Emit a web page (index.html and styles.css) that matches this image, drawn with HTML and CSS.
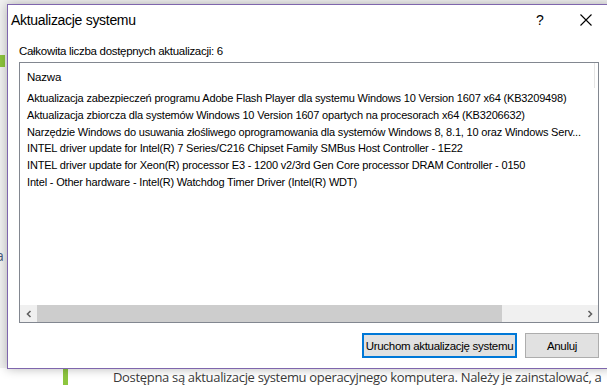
FILE: index.html
```html
<!DOCTYPE html>
<html lang="pl">
<head>
<meta charset="utf-8">
<title>Aktualizacje systemu</title>
<link rel="stylesheet" href="styles.css">
</head>
<body>
<div class="page">
  <div class="page-tab"></div>
  <div class="page-letter">a</div>
  <div class="page-bottom">
    <div class="green-bar"></div>
    <p class="page-text">Dostępna są aktualizacje systemu operacyjnego komputera. Należy je zainstalować, a</p>
  </div>
</div>

<div class="dialog">
  <div class="titlebar">
    <span class="title">Aktualizacje systemu</span>
    <span class="help">?</span>
    <span class="close">
      <svg width="12" height="12" viewBox="0 0 12 12"><path d="M0.5 0.5 L11.5 11.5 M11.5 0.5 L0.5 11.5" stroke="#000" stroke-width="1.1" fill="none"/></svg>
    </span>
  </div>
  <div class="content">
    <div class="count">Całkowita liczba dostępnych aktualizacji: 6</div>
    <div class="listbox">
      <div class="list-header"><span class="col">Nazwa</span><span class="col-div"></span></div>
      <div class="rows">
        <div class="row">Aktualizacja zabezpieczeń programu Adobe Flash Player dla systemu Windows 10 Version 1607 x64 (KB3209498)</div>
        <div class="row">Aktualizacja zbiorcza dla systemów Windows 10 Version 1607 opartych na procesorach x64 (KB3206632)</div>
        <div class="row">Narzędzie Windows do usuwania złośliwego oprogramowania dla systemów Windows 8, 8.1, 10 oraz Windows Serv...</div>
        <div class="row">INTEL driver update for Intel(R) 7 Series/C216 Chipset Family SMBus Host Controller - 1E22</div>
        <div class="row">INTEL driver update for Xeon(R) processor E3 - 1200 v2/3rd Gen Core processor DRAM Controller - 0150</div>
        <div class="row">Intel - Other hardware - Intel(R) Watchdog Timer Driver (Intel(R) WDT)</div>
      </div>
      <div class="hscroll">
        <span class="arrow left"><svg width="8" height="8" viewBox="0 0 8 8"><path d="M5.5 1 L2.5 4 L5.5 7" stroke="#606060" stroke-width="1.6" fill="none"/></svg></span>
        <span class="thumb"></span>
        <span class="track"></span>
        <span class="arrow right"><svg width="8" height="8" viewBox="0 0 8 8"><path d="M2.5 1 L5.5 4 L2.5 7" stroke="#606060" stroke-width="1.6" fill="none"/></svg></span>
      </div>
    </div>
    <div class="buttons">
      <button class="btn primary">Uruchom aktualizację systemu</button>
      <button class="btn">Anuluj</button>
    </div>
  </div>
</div>
</body>
</html>
```
FILE: styles.css
```css
html, body {
  margin: 0;
  padding: 0;
}
body {
  width: 607px;
  height: 385px;
  overflow: hidden;
  background: #f1f1f1;
  position: relative;
  font-family: "Liberation Sans", Arial, sans-serif;
}
.page {
  position: relative;
  width: 607px;
  height: 385px;
}
.page-tab {
  position: absolute;
  left: 0;
  top: 55px;
  width: 5px;
  height: 12px;
  background: #8cc43d;
}
.page-letter {
  position: absolute;
  left: -4px;
  top: 246px;
  font-family: "Open Sans", sans-serif;
  font-size: 14px;
  color: #4a5a7a;
}
.page-bottom {
  position: absolute;
  left: 0;
  top: 368px;
  width: 607px;
  height: 17px;
  background: #ffffff;
  display: flex;
}
.green-bar {
  margin-left: 63px;
  width: 5px;
  height: 17px;
  background: #8dc63f;
}
.page-text {
  margin: 0 0 0 45px;
  white-space: nowrap;
  font-family: "Open Sans", sans-serif;
  font-size: 13px;
  letter-spacing: -0.32px;
  line-height: 19px;
  color: #3a3a3a;
}

.dialog {
  position: absolute;
  left: 7px;
  top: 4px;
  width: 604px;
  height: 363px;
  background: #ffffff;
  border: 1px solid #7f66ad;
  box-shadow: 0 0 10px rgba(0, 0, 0, 0.28);
  display: flex;
  flex-direction: column;
}
.titlebar {
  height: 30px;
  display: flex;
  align-items: center;
  padding-left: 3px;
}
.title {
  font-size: 14px;
  letter-spacing: -0.3px;
  color: #000;
  flex: 1;
}
.help {
  font-size: 14px;
  width: 12px;
  text-align: center;
  margin-right: 34px;
}
.close {
  display: flex;
  margin-right: 20px;
}
.content {
  padding: 0 13px 0 11px;
  display: flex;
  flex-direction: column;
}
.count {
  font-size: 11.5px;
  letter-spacing: -0.3px;
  line-height: 16px;
  margin-top: 8px;
  color: #000;
}
.listbox {
  margin-top: 3px;
  height: 259px;
  border: 1px solid #828790;
  display: flex;
  flex-direction: column;
}
.list-header {
  height: 25px;
  display: flex;
  align-items: center;
  justify-content: space-between;
}
.col {
  padding-left: 7px;
  font-size: 11.5px;
  letter-spacing: -0.2px;
  padding-top: 2px;
}
.col-div {
  width: 1px;
  height: 25px;
  background: #e5e5e5;
  margin-right: 3px;
}
.rows {
  flex: 1;
  padding-top: 2px;
}
.row {
  padding-left: 7px;
  font-size: 11px;
  letter-spacing: -0.18px;
  line-height: 16.8px;
  white-space: nowrap;
  color: #000;
}
.hscroll {
  height: 17px;
  display: flex;
  background: #f0f0f0;
}
.arrow {
  width: 17px;
  height: 17px;
  display: flex;
  align-items: center;
  justify-content: center;
}
.thumb {
  width: 465px;
  height: 17px;
  background: #cdcdcd;
}
.track {
  flex: 1;
}
.buttons {
  margin-top: 10px;
  display: flex;
  justify-content: flex-end;
  gap: 8px;
}
.btn {
  height: 25px;
  box-sizing: border-box;
  background: #e1e1e1;
  border: 1px solid #adadad;
  font-family: "Liberation Sans", Arial, sans-serif;
  font-size: 11.5px;
  letter-spacing: -0.3px;
  color: #000;
  padding: 0;
  width: 74px;
  white-space: nowrap;
}
.btn.primary {
  width: 155px;
  border: 2px solid #0078d7;
}
```
